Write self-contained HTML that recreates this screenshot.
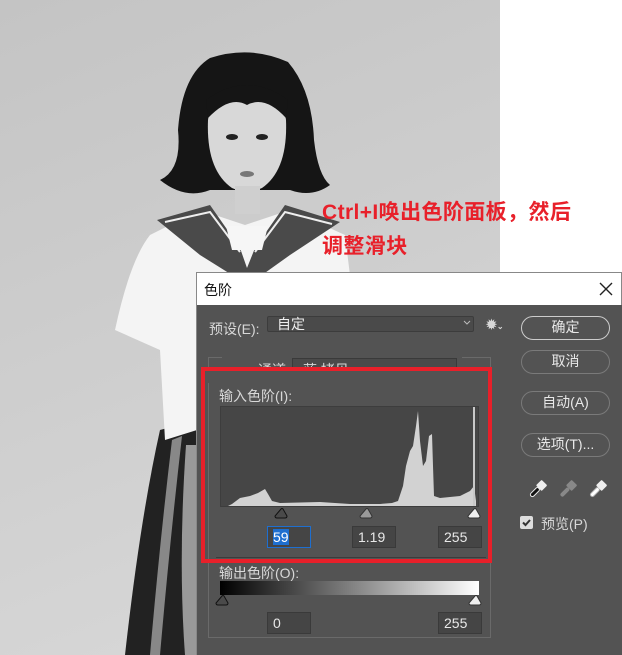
<!DOCTYPE html>
<html><head><meta charset="utf-8"><style>
*{margin:0;padding:0;box-sizing:border-box}
body{width:622px;height:655px;overflow:hidden;position:relative;font-family:"Liberation Sans","Noto Sans CJK SC",sans-serif;background:#fff}
.a{position:absolute}
.t{color:#d8d8d8;font-size:13px;white-space:nowrap}
.btn{position:absolute;left:521px;width:89px;height:24px;border:1.5px solid #7a7a7a;border-radius:12px;color:#e8e8e8;font-size:14px;text-align:center;line-height:21px}
.inp{position:absolute;width:44px;height:22px;border:1px solid #3a3a3a;background:#454545;color:#e8e8e8;font-size:14px;line-height:20px;padding-left:5px}
.red{color:#e8202a;font-weight:bold;font-size:21px;letter-spacing:0.4px;white-space:nowrap}
</style></head><body>
<svg class="a" style="left:0;top:0" width="622" height="655">
<defs><linearGradient id="bg" x1="0" y1="0" x2="0.3" y2="1"><stop offset="0" stop-color="#c4c4c4"/><stop offset="1" stop-color="#d6d6d6"/></linearGradient></defs>
<rect width="500" height="655" fill="url(#bg)"/>
<rect x="500" width="122" height="272" fill="#fff"/>
<!-- skirt -->
<path d="M160 430 L197 420 L197 655 L125 655 Q140 520 160 430Z" fill="#222"/>
<path d="M172 440 L182 436 Q170 540 160 655 L150 655 Q160 540 172 440Z" fill="#888"/>
<path d="M186 445 L197 445 L197 655 L185 655 Q178 560 186 445Z" fill="#999"/>
<!-- shirt -->
<path d="M150 235 L200 210 L245 225 L290 210 L345 235 L358 340 L330 345 L320 272 L197 272 L197 430 L165 440 L160 350 L115 330 Q130 260 150 235Z" fill="#f4f4f4"/>
<!-- hair -->
<path d="M210 58 Q250 45 288 62 Q312 90 314 140 Q318 175 330 185 Q312 198 290 190 L210 190 Q185 200 160 180 Q182 170 178 130 Q182 75 210 58Z" fill="#151515"/>
<!-- face -->
<path d="M208 120 Q210 100 247 98 Q284 100 286 120 Q288 170 262 188 Q247 195 232 188 Q206 170 208 120Z" fill="#d8d8d8"/>
<path d="M208 118 Q230 95 247 105 Q265 95 286 118 L288 100 Q247 70 206 100Z" fill="#151515"/>
<ellipse cx="232" cy="137" rx="6" ry="3" fill="#222"/><ellipse cx="262" cy="137" rx="6" ry="3" fill="#222"/>
<ellipse cx="247" cy="174" rx="7" ry="3" fill="#777"/>
<rect x="235" y="186" width="25" height="28" fill="#cfcfcf"/>
<!-- collar -->
<path d="M157 220 L210 205 L240 248 L247 268 L255 248 L285 205 L340 222 L290 255 L262 275 L232 275 L200 255Z" fill="#4a4a4a"/>
<path d="M165 222 L210 212 L240 252 M332 224 L285 212 L255 252" stroke="#eee" stroke-width="2" fill="none"/>
<path d="M226 226 L268 226 L262 250 L232 250Z" fill="#f6f6f6"/>
</svg>
<div class="a red" style="left:322px;top:196px">Ctrl+I唤出色阶面板，然后</div>
<div class="a red" style="left:322px;top:230px">调整滑块</div>

<!-- dialog -->
<div class="a" style="left:196px;top:272px;width:426px;height:383px;background:#535353;border-left:1px solid #888"></div>
<div class="a" style="left:196px;top:272px;width:426px;height:33px;background:#fff;border:1px solid #888;border-bottom:none"></div>
<div class="a" style="left:204px;top:280px;font-size:14px;color:#111">色阶</div>
<svg class="a" style="left:599px;top:282px" width="14" height="14"><path d="M1 1 L13 13 M13 1 L1 13" stroke="#222" stroke-width="1.4"/></svg>

<div class="a t" style="left:209px;top:319px;font-size:14px">预设(E):</div>
<div class="a" style="left:267px;top:316px;width:207px;height:16px;border:1px solid #3c3c3c;background:#4a4a4a;border-radius:2px"></div>
<div class="a t" style="left:277px;top:314px;font-size:14px;color:#eee">自定</div>
<svg class="a" style="left:463px;top:320px" width="8" height="6"><path d="M1 1 L4 4 L7 1" stroke="#bbb" fill="none"/></svg>
<div class="a t" style="left:486px;top:317px;font-size:13px;font-weight:bold">✹<span style="font-size:8px">⌄</span></div>

<div class="btn" style="top:316px;border-color:#ccc">确定</div>
<div class="btn" style="top:350px">取消</div>
<div class="btn" style="top:391px">自动(A)</div>
<div class="btn" style="top:433px">选项(T)...</div>

<!-- group box -->
<div class="a" style="left:208px;top:357px;width:283px;height:281px;border:1px solid #6a6a6a"></div>
<div class="a" style="left:222px;top:352px;width:240px;height:10px;background:#535353"></div>
<div class="a t" style="left:258px;top:360px;font-size:14px">通道:</div>
<div class="a" style="left:292px;top:358px;width:165px;height:22px;border:1px solid #3a3a3a;background:#4a4a4a"></div>
<div class="a t" style="left:303px;top:360px;font-size:14px">蓝 拷贝</div>

<div class="a" style="left:201px;top:367px;width:291px;height:196px;border:4px solid #e8202a"></div>
<div class="a" style="left:205px;top:371px;width:283px;height:12px;background:#535353"></div>

<div class="a t" style="left:219px;top:386px;font-size:14px">输入色阶(I):</div>
<div class="a" style="left:220px;top:406px;width:259px;height:101px;background:#464646;border:1px solid #3d3d3d"></div>
<svg class="a" style="left:220px;top:406px" width="259" height="101">
<path d="M8 100 L12 98 L20 92 L30 90 L38 87 L45 83 L48 88 L52 95 L60 97 L100 96 L130 98 L160 98 L172 97 L178 95 L183 80 L186 60 L190 45 L193 40 L196 20 L198 5 L200 35 L203 60 L206 55 L209 30 L212 28 L213 60 L214 90 L220 92 L240 90 L250 85 L254 80 L256 95 L256 100Z" fill="#d2d2d2"/>
<rect x="253" y="1" width="2" height="99" fill="#c8c8c8"/>
</svg>
<svg class="a" style="left:215px;top:505px" width="272" height="110">
<path d="M66 4 Q67 3 68 4 L72 11 Q72 13 70 13 L62 13 Q60 13 60 11Z" fill="#4a4a4a" stroke="#111" stroke-width="1"/>
<path d="M151 4 Q152 3 153 4 L157 11 Q157 13 155 13 L147 13 Q145 13 145 11Z" fill="#9a9a9a" stroke="#333" stroke-width="1"/>
<path d="M259 4 Q260 3 261 4 L265 11 Q265 13 263 13 L255 13 Q253 13 253 11Z" fill="#eee" stroke="#333" stroke-width="1"/>
<path d="M7 91 Q8 90 9 91 L13 98 Q13 100 11 100 L3 100 Q1 100 1 98Z" fill="#4a4a4a" stroke="#111" stroke-width="1"/>
<path d="M260 91 Q261 90 262 91 L266 98 Q266 100 264 100 L256 100 Q254 100 254 98Z" fill="#eee" stroke="#333" stroke-width="1"/>
</svg>
<div class="inp" style="left:267px;top:526px;border-color:#1e6fd0"><span style="background:#1e6fd0;color:#fff">59</span></div>
<div class="inp" style="left:352px;top:526px">1.19</div>
<div class="inp" style="left:438px;top:526px">255</div>
<div class="a" style="left:216px;top:557px;width:270px;height:1px;background:#3c3c3c"></div>

<div class="a t" style="left:219px;top:563px;font-size:14px">输出色阶(O):</div>
<div class="a" style="left:220px;top:581px;width:259px;height:14px;background:linear-gradient(to right,#000,#fff)"></div>
<div class="inp" style="left:267px;top:612px">0</div>
<div class="inp" style="left:438px;top:612px">255</div>

<!-- eyedroppers -->
<svg class="a" style="left:525px;top:478px" width="90" height="24">
<g transform="translate(6,18) rotate(-45)"><rect x="0" y="-2" width="11" height="4" rx="2" fill="#111" stroke="#eee" stroke-width="1"/><rect x="11" y="-4" width="8" height="8" rx="1" fill="#eee"/></g>
<g transform="translate(36,18) rotate(-45)"><rect x="0" y="-2" width="11" height="4" rx="2" fill="#888"/><rect x="11" y="-4" width="8" height="8" rx="1" fill="#888"/></g>
<g transform="translate(66,18) rotate(-45)"><rect x="0" y="-2" width="11" height="4" rx="2" fill="#fff" stroke="#aaa" stroke-width="1"/><rect x="11" y="-4" width="8" height="8" rx="1" fill="#eee"/></g>
</svg>
<div class="a" style="left:520px;top:516px;width:13px;height:13px;background:#ddd;border-radius:2px"></div>
<svg class="a" style="left:520px;top:516px" width="13" height="13"><path d="M3 6.5 L5.5 9 L10 4" stroke="#333" stroke-width="2" fill="none"/></svg>
<div class="a t" style="left:541px;top:514px;font-size:14px">预览(P)</div>
</body></html>
